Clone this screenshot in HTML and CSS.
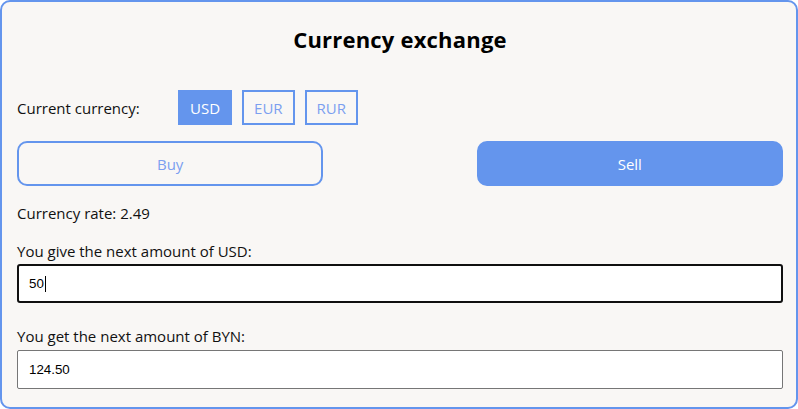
FILE: index.html
```html
<!DOCTYPE html>
<html lang="en">
<head>
<meta charset="utf-8">
<title>Currency exchange</title>
<link rel="stylesheet" href="styles.css">
</head>
<body>
<div class="card">
  <h1 class="title">Currency exchange</h1>
  <div class="currency-row">
    <span class="currency-label">Current currency:</span>
    <div class="currency-buttons">
      <button class="cur-btn active">USD</button>
      <button class="cur-btn">EUR</button>
      <button class="cur-btn">RUR</button>
    </div>
  </div>
  <div class="action-row">
    <button class="action-btn">Buy</button>
    <button class="action-btn active">Sell</button>
  </div>
  <p class="rate">Currency rate: 2.49</p>
  <label class="field-label give-label">You give the next amount of USD:</label>
  <div class="input-box focused">50<span class="caret"></span></div>
  <label class="field-label get-label">You get the next amount of BYN:</label>
  <div class="input-box">124.50</div>
</div>
</body>
</html>
```
FILE: styles.css
```css
* { box-sizing: border-box; }
html, body { margin: 0; padding: 0; }
body {
  font-family: "Open Sans", "Noto Sans", sans-serif;
  font-size: 15px;
  color: #111;
  background: #fff;
}
.card {
  width: 798px;
  height: 409px;
  border: 2px solid #6495ed;
  border-radius: 10px;
  background: #f9f7f5;
  padding: 0 13px 0 15px;
  display: flex;
  flex-direction: column;
}
.title {
  margin: 22px 0 0;
  font-size: 22px;
  line-height: 30px;
  font-weight: 700;
  text-align: center;
  color: #000;
  letter-spacing: 0.2px;
}
.currency-row {
  margin-top: 36px;
  display: flex;
  align-items: center;
  height: 35px;
}
.currency-label { width: 161px; line-height: 20px; }
.currency-buttons { display: flex; gap: 10px; }
.cur-btn {
  font-family: inherit;
  font-size: 15px;
  height: 35px;
  padding: 0 10px;
  border: 2px solid #6495ed;
  background: transparent;
  color: #7c9ff0;
  border-radius: 0;
}
.cur-btn.active { background: #6495ed; color: #fff; }
.action-row {
  margin-top: 16px;
  display: flex;
  justify-content: space-between;
}
.action-btn {
  width: 40%;
  height: 45px;
  font-family: inherit;
  font-size: 15px;
  border: 2px solid #6495ed;
  border-radius: 10px;
  background: transparent;
  color: #7c9ff0;
}
.action-btn.active { background: #6495ed; color: #fff; }
.rate { margin: 17px 0 0; line-height: 20px; }
.field-label { display: block; line-height: 20px; }
.give-label { margin-top: 18px; }
.get-label { margin-top: 23px; }
.input-box {
  margin-top: 3px;
  height: 39px;
  background: #fff;
  border: 1px solid #767676;
  border-radius: 2px;
  font-family: "Liberation Sans", Arial, sans-serif;
  font-size: 13.33px;
  padding: 0 11px;
  display: flex;
  align-items: center;
  color: #000;
}
.input-box.focused {
  border: 2px solid #101010;
  border-radius: 3px;
  padding: 0 10px;
}
.get-label + .input-box { margin-top: 4px; }
.caret { display: inline-block; width: 1px; height: 16px; background: #000; margin-left: 1px; }
```
